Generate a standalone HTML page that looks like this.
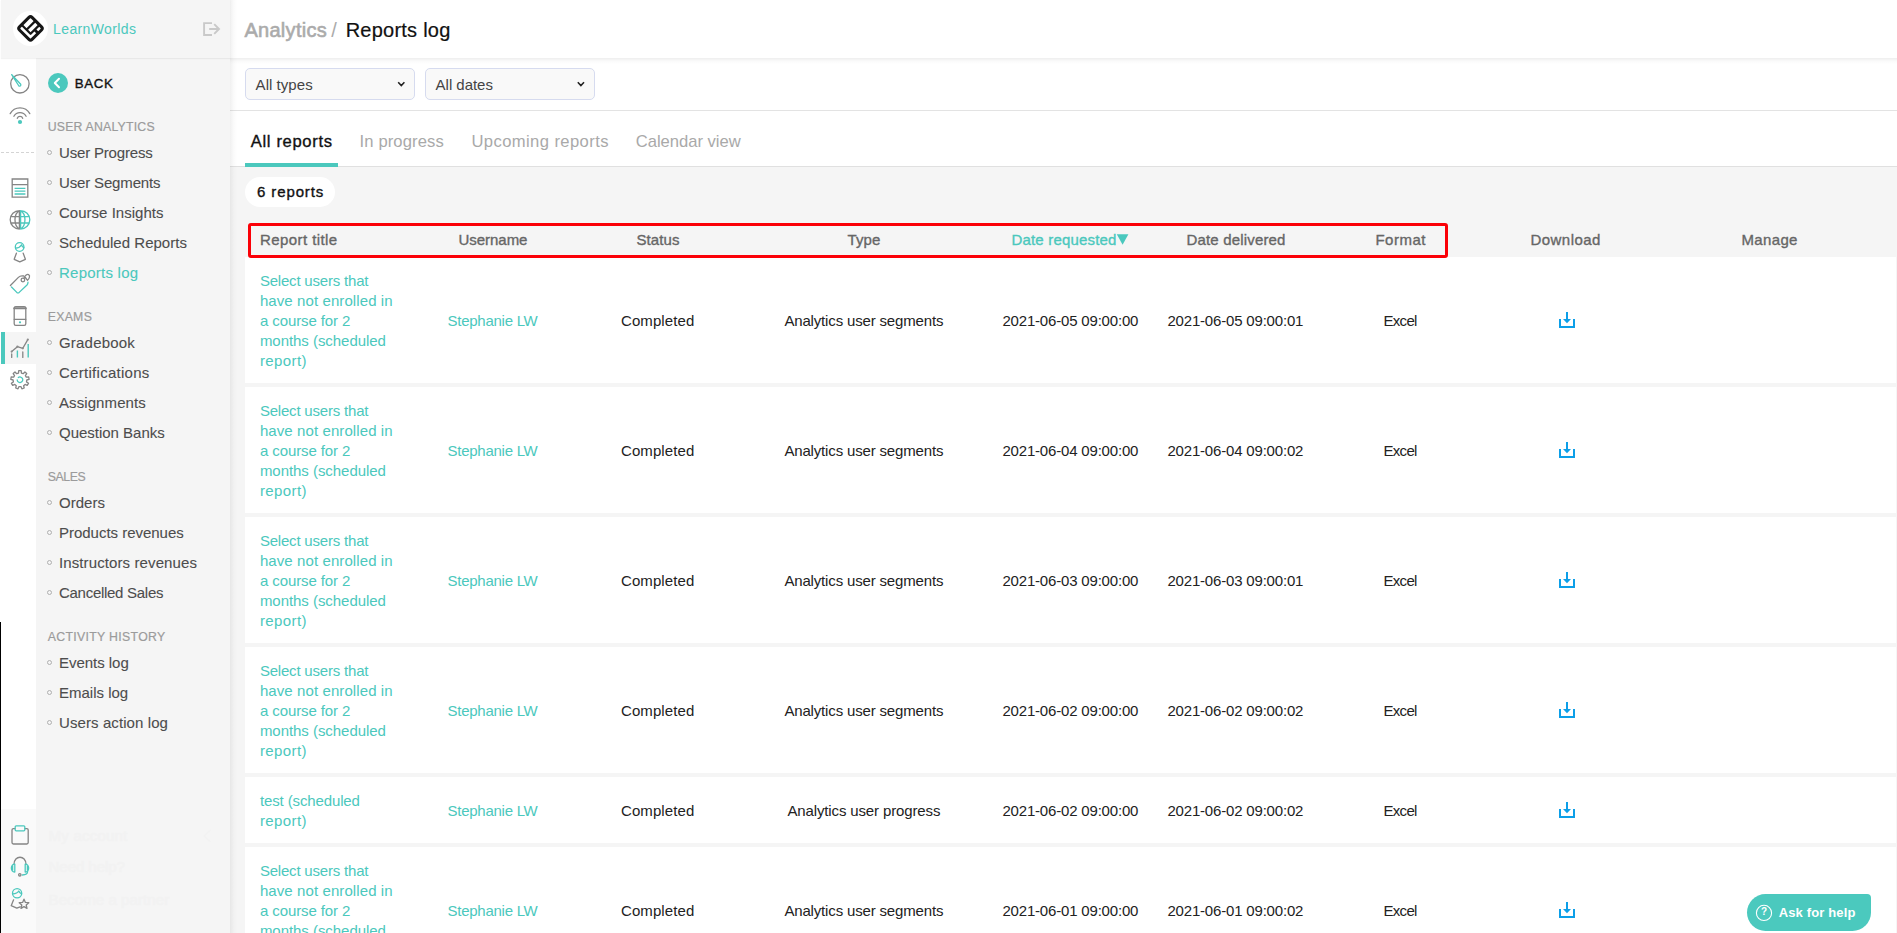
<!DOCTYPE html>
<html lang="en">
<head>
<meta charset="utf-8">
<title>Reports log</title>
<style>
*{box-sizing:border-box;margin:0;padding:0}
html,body{width:1897px;height:933px;overflow:hidden;background:#fff}
body{font-family:"Liberation Sans",sans-serif;color:#222;position:relative;font-size:15px}
.a{position:absolute}
.x{position:absolute;white-space:nowrap}
.sb{-webkit-text-stroke:.35px currentColor}
.mb{-webkit-text-stroke:.2px currentColor}

.lb{-webkit-text-stroke:.1px currentColor}
.hb{-webkit-text-stroke:.6px currentColor}
#strip{left:0;top:58px;width:36px;height:875px;background:#fff}
#stripact{left:0;top:332px;width:36px;height:32px;background:#f5f5f5;border-left:4px solid #4bc8bd;margin-left:1px}
#stripbot{left:0;top:809px;width:36px;height:124px;background:#fafafa}
#side{left:36px;top:58px;width:194px;height:875px;background:#f5f5f5}
#sidehead{left:1px;top:0;width:229px;height:58px;background:#f5f5f5;box-shadow:0 1px 1px rgba(0,0,0,.05)}
#sideshadow{left:230px;top:0;width:7px;height:933px;background:linear-gradient(90deg,rgba(0,0,0,.06),rgba(0,0,0,.02) 50%,rgba(0,0,0,0))}
#blackline{left:0;top:622px;width:1px;height:311px;background:#000}
#dash{left:1px;top:152px;width:33px;height:1px;background:repeating-linear-gradient(90deg,#d4d4d4 0 3px,transparent 3px 5px)}
#logo{left:12.7px;top:10.6px;width:35.6px;height:35.6px;border-radius:50%;background:#fff}
.dot{left:47px;width:5px;height:5px;border:1px solid #b0b0b0;border-radius:50%}
#backc{left:48px;top:73px;width:20px;height:20px;border-radius:50%;background:#4bc8bd}
#top{left:230px;top:0;width:1667px;height:58px;background:#fff}
#topsh{left:230px;top:58px;width:1667px;height:6px;background:linear-gradient(180deg,rgba(0,0,0,.065),rgba(0,0,0,.02) 50%,rgba(0,0,0,0))}
#filt{left:230px;top:58px;width:1667px;height:53px;background:#fff;border-bottom:1px solid #e3e3e3}
.sel{top:68px;width:170px;height:32px;border:1px solid #d6dbef;border-radius:5px;background:#f9f9f9}
#tabs{left:230px;top:111px;width:1667px;height:56px;background:#fff;border-bottom:1px solid #e0e0e0}
#tabline{left:245px;top:163px;width:93px;height:4px;background:#4bc8bd}
#gray{left:230px;top:167px;width:1667px;height:766px;background:#f5f5f5}
#pill{left:245px;top:177px;width:90px;height:30px;border-radius:15px;background:#fff}
#red{left:248px;top:223px;width:1200px;height:35px;border:3px solid #fb0007;border-radius:3px}
.row{left:245px;width:1651px;background:#fff}
#help{left:1747px;top:894px;width:124px;height:37px;background:#4bc9be;border-radius:19px 4px 19px 19px}
svg{position:absolute;overflow:visible}
</style>
</head>
<body>
<div class="a" id="strip"></div>
<div class="a" id="stripact"></div>
<div class="a" id="stripbot"></div>
<div class="a" id="side"></div>
<div class="a" id="top"></div>
<div class="a" id="filt"></div>
<div class="a" id="topsh"></div>
<div class="a" id="tabs"></div>
<div class="a" id="gray"></div>
<div class="a" id="sideshadow"></div>
<div class="a" id="sidehead"></div>
<div class="a" id="blackline"></div>
<div class="a" id="dash"></div>
<div class="a" id="logo"></div>
<div class="a" id="backc"></div>
<div class="a sel" style="left:245px"></div>
<div class="a sel" style="left:425px"></div>
<div class="a" id="tabline"></div>
<div class="a" id="pill"></div>
<div class="a row" style="top:257px;height:126px"></div>
<div class="a row" style="top:387px;height:126px"></div>
<div class="a row" style="top:517px;height:126px"></div>
<div class="a row" style="top:647px;height:126px"></div>
<div class="a row" style="top:777px;height:66px"></div>
<div class="a row" style="top:847px;height:126px"></div>
<div class="a" id="red"></div>
<div class="a" id="help"></div>
<div class="x" style="left:53.1px;top:18.5px;font-size:14px;line-height:20px;letter-spacing:0.367px;color:#4bc8bd;">LearnWorlds</div>
<div class="x sb" style="left:74.8px;top:74.3px;font-size:13.3px;line-height:20px;letter-spacing:0.638px;color:#111;">BACK</div>
<div class="x mb" style="left:47.7px;top:116.7px;font-size:12.3px;line-height:20px;letter-spacing:0.201px;color:#9b9b9b;">USER ANALYTICS</div>
<div class="x lb" style="left:59.0px;top:142.5px;font-size:15px;line-height:20px;letter-spacing:-0.176px;color:#4d4d4d;">User Progress</div>
<div class="x lb" style="left:59.0px;top:172.5px;font-size:15px;line-height:20px;letter-spacing:-0.152px;color:#4d4d4d;">User Segments</div>
<div class="x lb" style="left:59.0px;top:202.5px;font-size:15px;line-height:20px;letter-spacing:0.017px;color:#4d4d4d;">Course Insights</div>
<div class="x lb" style="left:59.0px;top:232.5px;font-size:15px;line-height:20px;letter-spacing:0.023px;color:#4d4d4d;">Scheduled Reports</div>
<div class="x lb" style="left:59.0px;top:262.5px;font-size:15px;line-height:20px;letter-spacing:0.234px;color:#4bc8bd;">Reports log</div>
<div class="x mb" style="left:47.7px;top:306.7px;font-size:12.3px;line-height:20px;letter-spacing:0.275px;color:#9b9b9b;">EXAMS</div>
<div class="x lb" style="left:59.0px;top:332.5px;font-size:15px;line-height:20px;letter-spacing:0.204px;color:#4d4d4d;">Gradebook</div>
<div class="x lb" style="left:59.0px;top:362.5px;font-size:15px;line-height:20px;letter-spacing:0.281px;color:#4d4d4d;">Certifications</div>
<div class="x lb" style="left:59.0px;top:392.5px;font-size:15px;line-height:20px;letter-spacing:0.088px;color:#4d4d4d;">Assignments</div>
<div class="x lb" style="left:59.0px;top:422.5px;font-size:15px;line-height:20px;letter-spacing:-0.011px;color:#4d4d4d;">Question Banks</div>
<div class="x mb" style="left:47.7px;top:466.7px;font-size:12.3px;line-height:20px;letter-spacing:-0.399px;color:#9b9b9b;">SALES</div>
<div class="x lb" style="left:59.0px;top:492.5px;font-size:15px;line-height:20px;letter-spacing:0.021px;color:#4d4d4d;">Orders</div>
<div class="x lb" style="left:59.0px;top:522.5px;font-size:15px;line-height:20px;letter-spacing:-0.02px;color:#4d4d4d;">Products revenues</div>
<div class="x lb" style="left:59.0px;top:552.5px;font-size:15px;line-height:20px;letter-spacing:0.108px;color:#4d4d4d;">Instructors revenues</div>
<div class="x lb" style="left:59.0px;top:582.5px;font-size:15px;line-height:20px;letter-spacing:-0.282px;color:#4d4d4d;">Cancelled Sales</div>
<div class="x mb" style="left:47.7px;top:626.7px;font-size:12.3px;line-height:20px;letter-spacing:0.319px;color:#9b9b9b;">ACTIVITY HISTORY</div>
<div class="x lb" style="left:59.0px;top:652.5px;font-size:15px;line-height:20px;letter-spacing:-0.032px;color:#4d4d4d;">Events log</div>
<div class="x lb" style="left:59.0px;top:682.5px;font-size:15px;line-height:20px;letter-spacing:-0.005px;color:#4d4d4d;">Emails log</div>
<div class="x lb" style="left:59.0px;top:712.5px;font-size:15px;line-height:20px;letter-spacing:0.093px;color:#4d4d4d;">Users action log</div>
<div class="a dot" style="top:150px"></div>
<div class="a dot" style="top:180px"></div>
<div class="a dot" style="top:210px"></div>
<div class="a dot" style="top:240px"></div>
<div class="a dot" style="top:270px"></div>
<div class="a dot" style="top:340px"></div>
<div class="a dot" style="top:370px"></div>
<div class="a dot" style="top:400px"></div>
<div class="a dot" style="top:430px"></div>
<div class="a dot" style="top:500px"></div>
<div class="a dot" style="top:530px"></div>
<div class="a dot" style="top:560px"></div>
<div class="a dot" style="top:590px"></div>
<div class="a dot" style="top:660px"></div>
<div class="a dot" style="top:690px"></div>
<div class="a dot" style="top:720px"></div>
<div class="x sb" style="left:48.6px;top:825.8px;font-size:15px;line-height:20px;letter-spacing:0.217px;color:#f2f2f2;">My account</div>
<div class="x sb" style="left:48.6px;top:857.4px;font-size:15px;line-height:20px;letter-spacing:-0.053px;color:#f2f2f2;">Need help?</div>
<div class="x sb" style="left:48.6px;top:889.8px;font-size:15px;line-height:20px;letter-spacing:0.088px;color:#f2f2f2;">Become a partner</div>
<div class="x hb" style="left:244.4px;top:15.9px;font-size:20px;line-height:28px;letter-spacing:0.296px;color:#ababab;">Analytics</div>
<div class="x" style="left:331.2px;top:15.9px;font-size:20px;line-height:28px;letter-spacing:0px;color:#ababab;">/</div>
<div class="x mb" style="left:345.7px;top:15.9px;font-size:20px;line-height:28px;letter-spacing:0.232px;color:#111;">Reports log</div>
<div class="x" style="left:255.6px;top:74.9px;font-size:15px;line-height:20px;letter-spacing:0.045px;color:#444;">All types</div>
<div class="x" style="left:435.6px;top:74.9px;font-size:15px;line-height:20px;letter-spacing:-0.023px;color:#444;">All dates</div>
<div class="x sb" style="left:250.8px;top:129.6px;font-size:16.6px;line-height:24px;letter-spacing:0.644px;color:#111;">All reports</div>
<div class="x" style="left:359.6px;top:129.6px;font-size:16.6px;line-height:24px;letter-spacing:0.112px;color:#a9a9a9;">In progress</div>
<div class="x" style="left:471.4px;top:129.6px;font-size:16.6px;line-height:24px;letter-spacing:0.41px;color:#a9a9a9;">Upcoming reports</div>
<div class="x" style="left:635.8px;top:129.6px;font-size:16.6px;line-height:24px;letter-spacing:-0.027px;color:#a9a9a9;">Calendar view</div>
<div class="x sb" style="left:257.1px;top:182.3px;font-size:15px;line-height:20px;letter-spacing:0.869px;color:#111;">6 reports</div>
<div class="x sb" style="left:260.0px;top:229.5px;font-size:15px;line-height:20px;letter-spacing:0.42px;color:#666;">Report title</div>
<div class="x sb" style="left:458.4px;top:229.5px;font-size:15px;line-height:20px;letter-spacing:-0.02px;color:#666;">Username</div>
<div class="x sb" style="left:636.4px;top:229.5px;font-size:15px;line-height:20px;letter-spacing:0.105px;color:#666;">Status</div>
<div class="x sb" style="left:847.4px;top:229.5px;font-size:15px;line-height:20px;letter-spacing:0.177px;color:#666;">Type</div>
<div class="x sb" style="left:1011.4px;top:229.5px;font-size:15px;line-height:20px;letter-spacing:0.191px;color:#4bc8bd;">Date requested</div>
<div class="x sb" style="left:1186.4px;top:229.5px;font-size:15px;line-height:20px;letter-spacing:0.179px;color:#666;">Date delivered</div>
<div class="x sb" style="left:1375.4px;top:229.5px;font-size:15px;line-height:20px;letter-spacing:0.509px;color:#666;">Format</div>
<div class="x sb" style="left:1530.4px;top:229.5px;font-size:15px;line-height:20px;letter-spacing:0.477px;color:#666;">Download</div>
<div class="x sb" style="left:1741.4px;top:229.5px;font-size:15px;line-height:20px;letter-spacing:0.369px;color:#666;">Manage</div>
<div class="x" style="left:1778.7px;top:903.0px;font-size:13px;line-height:20px;letter-spacing:0.144px;color:#fff;font-weight:700;">Ask for help</div>
<div class="x" style="left:259.9px;top:270.6px;font-size:15px;line-height:20px;letter-spacing:-0.198px;color:#4bc8bd;">Select users that</div>
<div class="x" style="left:259.9px;top:290.6px;font-size:15px;line-height:20px;letter-spacing:0.096px;color:#4bc8bd;">have not enrolled in</div>
<div class="x" style="left:259.9px;top:310.6px;font-size:15px;line-height:20px;letter-spacing:-0.09px;color:#4bc8bd;">a course for 2</div>
<div class="x" style="left:259.9px;top:330.6px;font-size:15px;line-height:20px;letter-spacing:-0.043px;color:#4bc8bd;">months (scheduled</div>
<div class="x" style="left:259.9px;top:350.6px;font-size:15px;line-height:20px;letter-spacing:0.395px;color:#4bc8bd;">report)</div>
<div class="x" style="left:447.6px;top:310.6px;font-size:15px;line-height:20px;letter-spacing:-0.269px;color:#4bc8bd;">Stephanie LW</div>
<div class="x" style="left:621.0px;top:310.6px;font-size:15px;line-height:20px;letter-spacing:0.089px;color:#222;">Completed</div>
<div class="x" style="left:784.4px;top:310.6px;font-size:15px;line-height:20px;letter-spacing:-0.16px;color:#222;">Analytics user segments</div>
<div class="x" style="left:1002.4px;top:310.6px;font-size:15px;line-height:20px;letter-spacing:-0.18px;color:#222;">2021-06-05 09:00:00</div>
<div class="x" style="left:1167.4px;top:310.6px;font-size:15px;line-height:20px;letter-spacing:-0.18px;color:#222;">2021-06-05 09:00:01</div>
<div class="x" style="left:1383.4px;top:310.6px;font-size:15px;line-height:20px;letter-spacing:-0.657px;color:#222;">Excel</div>
<div class="x" style="left:259.9px;top:400.6px;font-size:15px;line-height:20px;letter-spacing:-0.198px;color:#4bc8bd;">Select users that</div>
<div class="x" style="left:259.9px;top:420.6px;font-size:15px;line-height:20px;letter-spacing:0.096px;color:#4bc8bd;">have not enrolled in</div>
<div class="x" style="left:259.9px;top:440.6px;font-size:15px;line-height:20px;letter-spacing:-0.09px;color:#4bc8bd;">a course for 2</div>
<div class="x" style="left:259.9px;top:460.6px;font-size:15px;line-height:20px;letter-spacing:-0.043px;color:#4bc8bd;">months (scheduled</div>
<div class="x" style="left:259.9px;top:480.6px;font-size:15px;line-height:20px;letter-spacing:0.395px;color:#4bc8bd;">report)</div>
<div class="x" style="left:447.6px;top:440.6px;font-size:15px;line-height:20px;letter-spacing:-0.269px;color:#4bc8bd;">Stephanie LW</div>
<div class="x" style="left:621.0px;top:440.6px;font-size:15px;line-height:20px;letter-spacing:0.089px;color:#222;">Completed</div>
<div class="x" style="left:784.4px;top:440.6px;font-size:15px;line-height:20px;letter-spacing:-0.16px;color:#222;">Analytics user segments</div>
<div class="x" style="left:1002.4px;top:440.6px;font-size:15px;line-height:20px;letter-spacing:-0.18px;color:#222;">2021-06-04 09:00:00</div>
<div class="x" style="left:1167.4px;top:440.6px;font-size:15px;line-height:20px;letter-spacing:-0.18px;color:#222;">2021-06-04 09:00:02</div>
<div class="x" style="left:1383.4px;top:440.6px;font-size:15px;line-height:20px;letter-spacing:-0.657px;color:#222;">Excel</div>
<div class="x" style="left:259.9px;top:530.6px;font-size:15px;line-height:20px;letter-spacing:-0.198px;color:#4bc8bd;">Select users that</div>
<div class="x" style="left:259.9px;top:550.6px;font-size:15px;line-height:20px;letter-spacing:0.096px;color:#4bc8bd;">have not enrolled in</div>
<div class="x" style="left:259.9px;top:570.6px;font-size:15px;line-height:20px;letter-spacing:-0.09px;color:#4bc8bd;">a course for 2</div>
<div class="x" style="left:259.9px;top:590.6px;font-size:15px;line-height:20px;letter-spacing:-0.043px;color:#4bc8bd;">months (scheduled</div>
<div class="x" style="left:259.9px;top:610.6px;font-size:15px;line-height:20px;letter-spacing:0.395px;color:#4bc8bd;">report)</div>
<div class="x" style="left:447.6px;top:570.6px;font-size:15px;line-height:20px;letter-spacing:-0.269px;color:#4bc8bd;">Stephanie LW</div>
<div class="x" style="left:621.0px;top:570.6px;font-size:15px;line-height:20px;letter-spacing:0.089px;color:#222;">Completed</div>
<div class="x" style="left:784.4px;top:570.6px;font-size:15px;line-height:20px;letter-spacing:-0.16px;color:#222;">Analytics user segments</div>
<div class="x" style="left:1002.4px;top:570.6px;font-size:15px;line-height:20px;letter-spacing:-0.18px;color:#222;">2021-06-03 09:00:00</div>
<div class="x" style="left:1167.4px;top:570.6px;font-size:15px;line-height:20px;letter-spacing:-0.18px;color:#222;">2021-06-03 09:00:01</div>
<div class="x" style="left:1383.4px;top:570.6px;font-size:15px;line-height:20px;letter-spacing:-0.657px;color:#222;">Excel</div>
<div class="x" style="left:259.9px;top:660.6px;font-size:15px;line-height:20px;letter-spacing:-0.198px;color:#4bc8bd;">Select users that</div>
<div class="x" style="left:259.9px;top:680.6px;font-size:15px;line-height:20px;letter-spacing:0.096px;color:#4bc8bd;">have not enrolled in</div>
<div class="x" style="left:259.9px;top:700.6px;font-size:15px;line-height:20px;letter-spacing:-0.09px;color:#4bc8bd;">a course for 2</div>
<div class="x" style="left:259.9px;top:720.6px;font-size:15px;line-height:20px;letter-spacing:-0.043px;color:#4bc8bd;">months (scheduled</div>
<div class="x" style="left:259.9px;top:740.6px;font-size:15px;line-height:20px;letter-spacing:0.395px;color:#4bc8bd;">report)</div>
<div class="x" style="left:447.6px;top:700.6px;font-size:15px;line-height:20px;letter-spacing:-0.269px;color:#4bc8bd;">Stephanie LW</div>
<div class="x" style="left:621.0px;top:700.6px;font-size:15px;line-height:20px;letter-spacing:0.089px;color:#222;">Completed</div>
<div class="x" style="left:784.4px;top:700.6px;font-size:15px;line-height:20px;letter-spacing:-0.16px;color:#222;">Analytics user segments</div>
<div class="x" style="left:1002.4px;top:700.6px;font-size:15px;line-height:20px;letter-spacing:-0.18px;color:#222;">2021-06-02 09:00:00</div>
<div class="x" style="left:1167.4px;top:700.6px;font-size:15px;line-height:20px;letter-spacing:-0.18px;color:#222;">2021-06-02 09:00:02</div>
<div class="x" style="left:1383.4px;top:700.6px;font-size:15px;line-height:20px;letter-spacing:-0.657px;color:#222;">Excel</div>
<div class="x" style="left:259.9px;top:790.6px;font-size:15px;line-height:20px;letter-spacing:-0.12px;color:#4bc8bd;">test (scheduled</div>
<div class="x" style="left:259.9px;top:810.6px;font-size:15px;line-height:20px;letter-spacing:0.395px;color:#4bc8bd;">report)</div>
<div class="x" style="left:447.6px;top:800.6px;font-size:15px;line-height:20px;letter-spacing:-0.269px;color:#4bc8bd;">Stephanie LW</div>
<div class="x" style="left:621.0px;top:800.6px;font-size:15px;line-height:20px;letter-spacing:0.089px;color:#222;">Completed</div>
<div class="x" style="left:787.4px;top:800.6px;font-size:15px;line-height:20px;letter-spacing:-0.129px;color:#222;">Analytics user progress</div>
<div class="x" style="left:1002.4px;top:800.6px;font-size:15px;line-height:20px;letter-spacing:-0.18px;color:#222;">2021-06-02 09:00:00</div>
<div class="x" style="left:1167.4px;top:800.6px;font-size:15px;line-height:20px;letter-spacing:-0.18px;color:#222;">2021-06-02 09:00:02</div>
<div class="x" style="left:1383.4px;top:800.6px;font-size:15px;line-height:20px;letter-spacing:-0.657px;color:#222;">Excel</div>
<div class="x" style="left:259.9px;top:860.6px;font-size:15px;line-height:20px;letter-spacing:-0.198px;color:#4bc8bd;">Select users that</div>
<div class="x" style="left:259.9px;top:880.6px;font-size:15px;line-height:20px;letter-spacing:0.096px;color:#4bc8bd;">have not enrolled in</div>
<div class="x" style="left:259.9px;top:900.6px;font-size:15px;line-height:20px;letter-spacing:-0.09px;color:#4bc8bd;">a course for 2</div>
<div class="x" style="left:259.9px;top:920.6px;font-size:15px;line-height:20px;letter-spacing:-0.043px;color:#4bc8bd;">months (scheduled</div>
<div class="x" style="left:259.9px;top:940.6px;font-size:15px;line-height:20px;letter-spacing:0.395px;color:#4bc8bd;">report)</div>
<div class="x" style="left:447.6px;top:900.6px;font-size:15px;line-height:20px;letter-spacing:-0.269px;color:#4bc8bd;">Stephanie LW</div>
<div class="x" style="left:621.0px;top:900.6px;font-size:15px;line-height:20px;letter-spacing:0.089px;color:#222;">Completed</div>
<div class="x" style="left:784.4px;top:900.6px;font-size:15px;line-height:20px;letter-spacing:-0.16px;color:#222;">Analytics user segments</div>
<div class="x" style="left:1002.4px;top:900.6px;font-size:15px;line-height:20px;letter-spacing:-0.18px;color:#222;">2021-06-01 09:00:00</div>
<div class="x" style="left:1167.4px;top:900.6px;font-size:15px;line-height:20px;letter-spacing:-0.18px;color:#222;">2021-06-01 09:00:02</div>
<div class="x" style="left:1383.4px;top:900.6px;font-size:15px;line-height:20px;letter-spacing:-0.657px;color:#222;">Excel</div>
<svg style="left:1559px;top:312px" width="16" height="16" viewBox="0 0 16 16"><path d="M1 7.1V15H15V7.1M8 0V8" fill="none" stroke="#0d9fe8" stroke-width="2"/><path d="M4 6.9H12L8 11.2Z" fill="#0d9fe8"/></svg>
<svg style="left:1559px;top:442px" width="16" height="16" viewBox="0 0 16 16"><path d="M1 7.1V15H15V7.1M8 0V8" fill="none" stroke="#0d9fe8" stroke-width="2"/><path d="M4 6.9H12L8 11.2Z" fill="#0d9fe8"/></svg>
<svg style="left:1559px;top:572px" width="16" height="16" viewBox="0 0 16 16"><path d="M1 7.1V15H15V7.1M8 0V8" fill="none" stroke="#0d9fe8" stroke-width="2"/><path d="M4 6.9H12L8 11.2Z" fill="#0d9fe8"/></svg>
<svg style="left:1559px;top:702px" width="16" height="16" viewBox="0 0 16 16"><path d="M1 7.1V15H15V7.1M8 0V8" fill="none" stroke="#0d9fe8" stroke-width="2"/><path d="M4 6.9H12L8 11.2Z" fill="#0d9fe8"/></svg>
<svg style="left:1559px;top:802px" width="16" height="16" viewBox="0 0 16 16"><path d="M1 7.1V15H15V7.1M8 0V8" fill="none" stroke="#0d9fe8" stroke-width="2"/><path d="M4 6.9H12L8 11.2Z" fill="#0d9fe8"/></svg>
<svg style="left:1559px;top:902px" width="16" height="16" viewBox="0 0 16 16"><path d="M1 7.1V15H15V7.1M8 0V8" fill="none" stroke="#0d9fe8" stroke-width="2"/><path d="M4 6.9H12L8 11.2Z" fill="#0d9fe8"/></svg>
<svg style="left:0;top:0" width="1897" height="933" viewBox="0 0 1897 933" fill="none" stroke-linecap="round" stroke-linejoin="round">
<!-- logo -->
<g transform="translate(30.5 28.4) rotate(-45)" stroke="#161616" stroke-linecap="butt">
<rect x="-8.9" y="-8.9" width="17.8" height="17.8" rx="2.2" stroke-width="3"/>
<path d="M-3.8 -8.5V3.9H8.5M-3.8 -1.8H8.5" stroke-width="2.2"/>
<path d="M2 3.9V8.5" stroke-width="2.8"/>
</g>
<!-- logout -->
<g stroke="#c9c9c9" stroke-width="1.9" stroke-linecap="butt" stroke-linejoin="miter">
<path d="M212 23.1H204.1V35H212"/>
<path d="M209.2 29H218.5M214.2 24.2L219 29L214.2 33.8"/>
</g>
<!-- back chevron -->
<path d="M59 78.8L54.8 83L59 87.2" stroke="#fff" stroke-width="2"/>
<path d="M210 830.5L204 836L210 841.5" stroke="#f2f2f2" stroke-width="1.6"/>
<!-- select chevrons -->
<path d="M398.2 82.3L401.3 85.5L404.4 82.3M577.8 82.3L580.9 85.5L584 82.3" stroke="#222" stroke-width="1.6" stroke-linecap="butt" stroke-linejoin="miter"/>
<!-- sort arrow -->
<path d="M1116.8 234.2H1128.4L1122.6 244.8Z" fill="#4ac8be"/>
<!-- help icon -->
<circle cx="1764" cy="912.9" r="7.6" stroke="#fff" stroke-width="1.1"/>
<!-- strip icons -->
<g stroke="#858585" stroke-width="1.3">
<!-- gauge -->
<circle cx="19.9" cy="83.8" r="9.2"/>
<!-- wifi -->
<path d="M10.2 113.6A11.3 11.3 0 0 1 29.8 113.6M13.9 116.2A7 7 0 0 1 26.1 116.2M17.3 118.3A2.9 2.9 0 0 1 22.7 118.3"/>
<!-- page -->
<path d="M12.2 179H27.8V197.2H12.2ZM12.2 184.6H27.8" stroke-linejoin="miter"/>
<!-- globe left half -->
<path d="M19.4 210.6A9.2 9.2 0 0 0 19.4 229M19.4 210.6C13.5 214 13.5 225.6 19.4 229M10.8 216.6H19M10.8 223H19M19.4 210.6V229"/>
<!-- person body -->
<path d="M16.4 253.2L14.2 259.3L19.8 261.8L25.4 259.3L23.2 253.2"/>
<!-- tag gray -->
<path d="M10.4 285.5L18.4 277.4Q20.6 275.2 23.6 276"/>
<circle cx="22.9" cy="280" r="1.8"/>
<path d="M24 278.2C24.5 275.6 27 273.9 28.6 274.6C30.7 275.7 29 279 27.5 280.3C26.6 279.2 25.7 278.2 25.3 277.4"/>
<!-- phone -->
<rect x="14.2" y="306.7" width="11.6" height="18.6" rx="1.6"/>
<path d="M14.2 308.3H25.8" stroke-width="2"/><path d="M14.2 319.3H25.8"/>
<!-- chart gray -->
<path d="M11.7 354V357.4M22.8 352V357.4"/>
<path d="M11.7 351.6L17.4 346.7L22.8 348.3L27.8 339.6"/>
<!-- gear -->
<path d="M18.5 373.1L18.7 370.7L21.2 370.7L21.4 373.1L23.2 373.7L24.9 372.0L26.7 373.6L25.4 375.6L26.3 377.2L28.7 377.0L29.1 379.4L26.8 380.0L26.5 381.9L28.5 383.3L27.2 385.4L25.1 384.4L23.6 385.7L24.2 388.0L21.9 388.8L20.9 386.6L19.0 386.6L18.0 388.8L15.7 388.0L16.3 385.7L14.8 384.4L12.7 385.4L11.4 383.3L13.4 381.9L13.1 380.0L10.8 379.4L11.2 377.0L13.6 377.2L14.5 375.6L13.2 373.6L15.0 372.0L16.7 373.7Z" stroke-linejoin="round"/>
<!-- clipboard -->
<path d="M15 828.6H13.4Q12 828.6 12 830V842.6Q12 844 13.4 844H26.8Q28.2 844 28.2 842.6V830Q28.2 828.6 26.8 828.6H25"/>
<!-- headset band -->
<path d="M14 864.5C14 854.8 26 854.8 26 864.5"/>
<circle cx="19.8" cy="874.8" r="1.2"/>
<!-- person star body -->
<path d="M13.6 899.8L11.2 905.7L16.8 908.2L20.2 906.8"/>
<path d="M24 899.2L25.4 902.4L28.8 902.7L26.2 905L27 908.4L24 906.6L21 908.4L21.8 905L19.2 902.7L22.6 902.4Z"/>
</g>
<g fill="#8c8c8c"><circle cx="11.7" cy="351.6" r="1.1"/><circle cx="17.4" cy="346.7" r="1.1"/><circle cx="22.8" cy="348.3" r="1.1"/><circle cx="27.8" cy="339.6" r="1.1"/></g>
<g stroke="#4bc8bd" stroke-width="1.3">
<!-- gauge needle -->
<path d="M11.7 74.6L20.7 84.2Q21.3 86.6 18.9 86Z"/>
<!-- page lines -->
<path d="M14.6 188.4H25.4M14.6 191.2H25.4M14.6 194H25.4" stroke-linecap="butt"/>
<!-- globe right half -->
<path d="M20.6 210.6A9.2 9.2 0 0 1 20.6 229M20.6 210.6C26.4 214 26.4 225.6 20.6 229M20.6 216.6H29.2M20.6 223H29.2M20.6 210.6V229"/>
<!-- person head -->
<circle cx="19.6" cy="247" r="4.3"/>
<path d="M15.6 248.2C18.5 248 20.6 246.6 21.6 244.8C22 246.4 23 247.3 23.8 247.5"/>
<!-- tag teal -->
<path d="M11.5 287L16.8 292.4Q18 293.4 19.2 292.4L27 285Q28 284 28 282.2"/>
<!-- chart teal -->
<path d="M17.4 350.6V357.4M28.2 344V357.4" stroke-linecap="butt" stroke-width="1.4"/>
<!-- gear inner -->
<path d="M18.3 377.5A2.8 2.8 0 1 1 17.2 380.0"/>
<!-- clipboard clip -->
<rect x="15.2" y="825.8" width="9.6" height="5" rx="1"/>
<!-- headset cups -->
<path d="M14.8 864.2C10.2 864 10.2 872.2 14.8 872ZM25.2 864.2C29.8 864 29.8 872.2 25.2 872Z"/>
<path d="M12.6 866V870.2M27.4 866V870.2"/>
<path d="M27.6 871.6C27.6 874.2 25 875 22.4 875"/>
<!-- person star head -->
<circle cx="17.1" cy="893.3" r="4.6"/>
<path d="M12.8 893.8C15.5 893.8 17.8 892.8 18.8 891C19.4 892.8 20.6 893.6 21.6 893.8"/>
</g>
<circle cx="20" cy="122" r="2.1" fill="#4bc8bd"/>
<circle cx="20" cy="322.3" r="1.1" fill="#4bc8bd"/>
</svg>
<div class="x" style="left:1761.1px;top:905.2px;font-size:10px;line-height:14px;font-weight:700;color:#fff">?</div>

</body>
</html>
